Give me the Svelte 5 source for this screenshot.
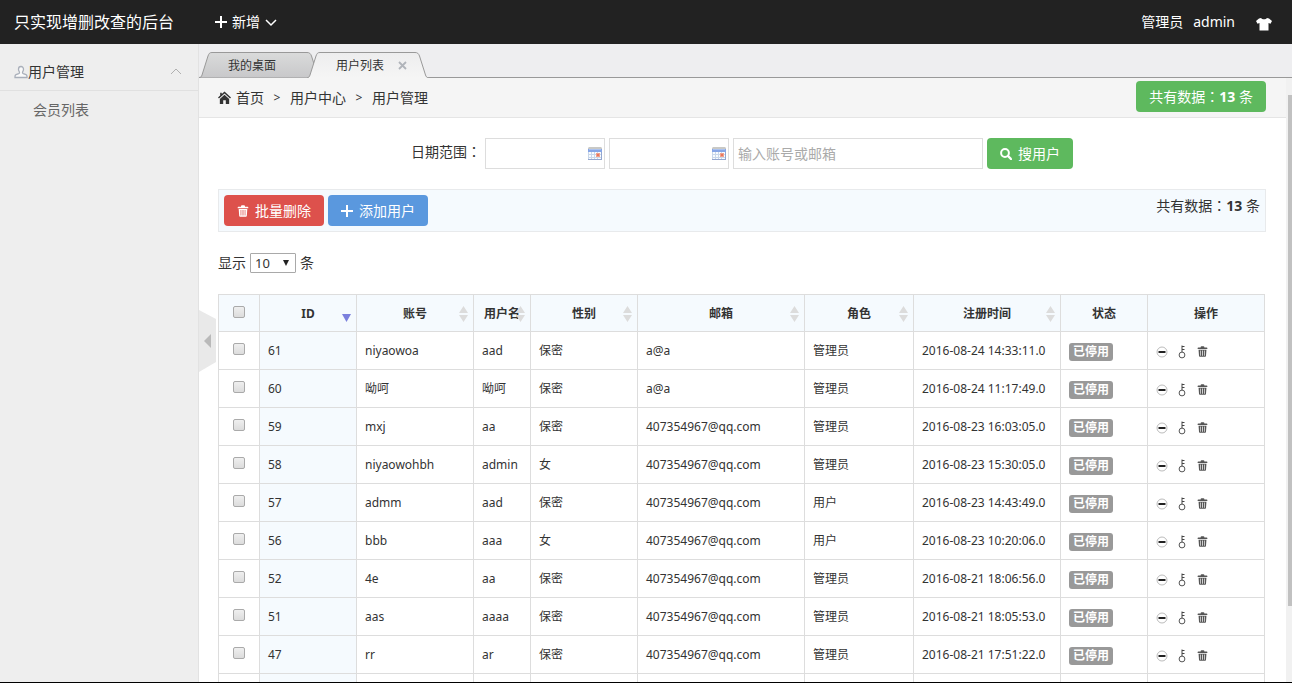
<script>
  const columns = [
    { label: 'ID', width: 97, sort: 'desc' },
    { label: '账号', width: 117, sort: 'both' },
    { label: '用户名', width: 57, sort: 'both' },
    { label: '性别', width: 107, sort: 'both' },
    { label: '邮箱', width: 167, sort: 'both' },
    { label: '角色', width: 109, sort: 'both' },
    { label: '注册时间', width: 147, sort: 'both' },
    { label: '状态', width: 87, sort: '' },
    { label: '操作', width: 117, sort: '' }
  ];

  const users = [
    [61, 'niyaowoa', 'aad', '保密', 'a@a', '管理员', '2016-08-24 14:33:11.0'],
    [60, '呦呵', '呦呵', '保密', 'a@a', '管理员', '2016-08-24 11:17:49.0'],
    [59, 'mxj', 'aa', '保密', '407354967@qq.com', '管理员', '2016-08-23 16:03:05.0'],
    [58, 'niyaowohbh', 'admin', '女', '407354967@qq.com', '管理员', '2016-08-23 15:30:05.0'],
    [57, 'admm', 'aad', '保密', '407354967@qq.com', '用户', '2016-08-23 14:43:49.0'],
    [56, 'bbb', 'aaa', '女', '407354967@qq.com', '用户', '2016-08-23 10:20:06.0'],
    [52, '4e', 'aa', '保密', '407354967@qq.com', '管理员', '2016-08-21 18:06:56.0'],
    [51, 'aas', 'aaaa', '保密', '407354967@qq.com', '管理员', '2016-08-21 18:05:53.0'],
    [47, 'rr', 'ar', '保密', '407354967@qq.com', '管理员', '2016-08-21 17:51:22.0']
  ];

  let selected = $state([]);
  let menuOpen = $state(true);
  const toggleAll = (e) => {
    selected = e.currentTarget.checked ? users.map((u) => u[0]) : [];
  };
</script>

{#snippet trash(size)}
  <svg width={size} height={size} viewBox="0 0 12 12" aria-hidden="true">
    <path fill="currentColor" fill-rule="evenodd" d="M4 1.2C4 .6 4.4.3 5 .3h2c.6 0 1 .3 1 .9v.5h2.6c.5 0 .7.3.7.7v.9H.7v-.9c0-.4.2-.7.7-.7H4zM1.7 4h8.6l-.5 7c0 .5-.4.8-.9.8H3.1c-.5 0-.9-.3-.9-.8zM3.6 5v5.6h.7V5zM5.600 5v5.600h.8V5zM7.700 5v5.600h.7V5z" />
  </svg>
{/snippet}

{#snippet calendar()}
  <svg class="cal" width="16" height="16" viewBox="0 0 16 16" aria-hidden="true">
    <path fill="#c9c9c6" d="M2 1h12l1 1v1H1V2z" />
    <path fill="#86a5e6" d="M1 3h14v3H1z" />
    <path fill="#aac2f0" d="M2 3h12v1H2z" />
    <path fill="#f8fbfe" d="M1 6h14v7H1z" />
    <path stroke="#c9d7ea" d="M1.500 6v7M4.500 6v7M7.500 6v7M10.500 6v7M1 8.500h13M1 11.500h13" fill="none" />
    <path fill="#f0a08c" d="M9 7h4v4H9z" />
    <path fill="#e8775c" d="M10 8h2v2h-2z" />
    <path fill="#93a6cf" d="M1 13h14v1H1zM14 6h1v8h-1z" />
  </svg>
{/snippet}

<div class="app">
  <header class="top">
    <a class="brand" href="#home">只实现增删改查的后台</a>
    <button class="new">
      <svg width="12" height="12" viewBox="0 0 12 12" aria-hidden="true"><path d="M6 0v12M0 6h12" stroke="#fff" stroke-width="2" /></svg>
      新增
      <svg width="12" height="12" viewBox="0 0 12 12" aria-hidden="true"><path d="M1 4l5 5 5-5" fill="none" stroke="#fff" stroke-width="1.500" /></svg>
    </button>
    <div class="account">
      <span>管理员</span>
      <a href="#admin">admin</a>
      <button class="skin" aria-label="换肤">
        <svg width="16" height="14" viewBox="0 0 16 14" aria-hidden="true"><path fill="#fff" d="M5 1c1 1.800 5 1.800 6 0l2 .5L16 4l-1.500 2.800-2-.8v7.500h-9V6l-2 .8L0 4l3-2.500z" /></svg>
      </button>
    </div>
  </header>

  <div class="body">
    <aside class="side">
      <button class="group" onclick={() => (menuOpen = !menuOpen)}>
        <svg width="14" height="14" viewBox="0 0 14 14" aria-hidden="true"><path d="M7 1.500C5.400 1.500 4.500 2.700 4.500 4.300c0 1.300.6 2 1 2.900.2.700-.2 1.100-.8 1.400L2 9.700c-.8.400-1 .8-1 1.800v1h12v-1c0-1-.2-1.400-1-1.800L9.300 8.600c-.6-.3-1-.7-.8-1.400.4-.9 1-1.600 1-2.900 0-1.600-.9-2.800-2.500-2.800z" fill="#fafafa" stroke="#a9afba" stroke-width="1.300" /></svg>
        <span>用户管理</span>
        <svg class="fold" width="12" height="12" viewBox="0 0 12 12" aria-hidden="true"><path d="M1 8l5-5 5 5" fill="none" stroke="#b0b0b0" /></svg>
      </button>
      {#if menuOpen}
        <a class="entry" href="#members">会员列表</a>
      {/if}
    </aside>

    <section class="work">
      <ul class="tabs">
        <li class="tab">
          <svg width="122" height="26" viewBox="0 0 122 26" aria-hidden="true">
            <defs><linearGradient id="tabGrey" x2="0" y2="1"><stop stop-color="#dadbdb" /><stop offset="1" stop-color="#c8c8ca" /></linearGradient></defs>
            <path d="M0 25.500C2 25.500 2.500 24.500 3 23L9 4C10 1.500 10.500.5 13 .5h95c2.500 0 3.500 1 4.500 3.500l6 19c.5 1.500 1 2.500 3.500 2.500" fill="url(#tabGrey)" stroke="#999" />
          </svg>
          <a href="#desktop">我的桌面</a>
        </li>
        <li class="tab active">
          <svg width="122" height="26" viewBox="0 0 122 26" aria-hidden="true">
            <defs><linearGradient id="tabLight" x2="0" y2="1"><stop stop-color="#ededee" /><stop offset="1" stop-color="#f5f5f5" /></linearGradient></defs>
            <path d="M0 26C2 25.500 2.500 24.500 3 23L9 4C10 1.500 10.500.5 13 .5h95c2.500 0 3.500 1 4.500 3.500l6 19c.5 1.500 1 2.500 3.500 3" fill="url(#tabLight)" stroke="#999" />
          </svg>
          <a href="#users">用户列表</a>
          <button class="close" aria-label="关闭">
            <svg width="9" height="9" viewBox="0 0 9 9" aria-hidden="true"><path d="M1 1l7 7M8 1L1 8" stroke="#b0b4ba" stroke-width="1.800" /></svg>
          </button>
        </li>
      </ul>

      <div class="frame">
        <main class="page">
          <nav class="crumbs">
            <svg width="13" height="13" viewBox="0 0 12 12" aria-hidden="true"><path fill="#333" d="M6 .5L12 6l-.9 1L6 2.400.9 7 0 6l2-1.900V1.500h1.500v1.300zM6 3.500L10.300 7.300V12H7.200V8.500H4.800V12H1.700V7.300z" /></svg>
            <a class="first" href="#home">首页</a><span class="sep">&gt;</span><a href="#center">用户中心</a><span class="sep">&gt;</span><a href="#users">用户管理</a>
            <a class="btn green total" href="#refresh">共有数据<span class="colon">：</span><b>13</b> 条</a>
          </nav>

          <div class="content">
            <form class="search" onsubmit={(e) => e.preventDefault()}>
              <label for="from">日期范围<span class="colon">：</span></label>
              <span class="date"><input id="from" type="text" />{@render calendar()}</span>
              <span class="date"><input type="text" aria-label="结束日期" />{@render calendar()}</span>
              <input class="keyword" type="text" placeholder="输入账号或邮箱" aria-label="账号或邮箱" />
              <button class="btn green">
                <svg width="12" height="12" viewBox="0 0 12 12" aria-hidden="true"><circle cx="5" cy="5" r="3.900" fill="none" stroke="#fff" stroke-width="2" /><path d="M8 8l3 3" stroke="#fff" stroke-width="2.400" stroke-linecap="round" /></svg>
                搜用户
              </button>
            </form>

            <div class="bar">
              <button class="btn red">{@render trash(12)}批量删除</button>
              <button class="btn blue">
                <svg width="12" height="12" viewBox="0 0 12 12" aria-hidden="true"><path d="M6 0v12M0 6h12" stroke="#fff" stroke-width="2" /></svg>
                添加用户
              </button>
              <span class="count">共有数据<span class="colon">：</span><b>13</b> 条</span>
            </div>

            <div class="length">
              <label for="size">显示</label>
              <span class="select">
                <select id="size"><option>10</option><option>25</option><option>50</option></select>
                <svg width="6" height="6" viewBox="0 0 6 6" aria-hidden="true"><path d="M0 0h6L3 6z" fill="#222" /></svg>
              </span>
              <span>条</span>
            </div>

            <table>
              <colgroup>
                <col style="width:{(41 / 1046) * 100}%" />
                {#each columns as c}<col style="width:{(c.width / 1046) * 100}%" />{/each}
              </colgroup>
              <thead>
                <tr>
                  <th class="check"><input type="checkbox" aria-label="全选" onchange={toggleAll} /></th>
                  {#each columns as c}
                    <th>
                      {c.label}
                      {#if c.sort}
                        <svg class="sort" width="9" height="16" viewBox="0 0 9 16" aria-hidden="true">
                          {#if c.sort === 'desc'}
                            <path d="M0 8h9l-4.500 8z" fill="#7b80dd" />
                          {:else}
                            <path d="M0 7h9L4.500 0zM0 9h9l-4.500 7z" fill="#dcdcdc" />
                          {/if}
                        </svg>
                      {/if}
                    </th>
                  {/each}
                </tr>
              </thead>
              <tbody>
                {#each users as user}
                  <tr>
                    <td class="check"><input type="checkbox" value={user[0]} bind:group={selected} aria-label="选择 {user[0]}" /></td>
                    {#each user as value, i}<td class:sorted={i === 0}>{value}</td>{/each}
                    <td><span class="badge">已停用</span></td>
                    <td>
                      <div class="ops">
                        <button aria-label="停用">
                          <svg width="12" height="12" viewBox="0 0 12 12" aria-hidden="true"><circle cx="6" cy="6" r="5" fill="none" stroke="#aaa" stroke-width=".8" /><path d="M2.500 6h7" stroke="#222" stroke-width="2" /></svg>
                        </button>
                        <button aria-label="修改密码">
                          <svg width="12" height="14" viewBox="0 0 12 14" aria-hidden="true"><circle cx="6" cy="10" r="2.900" fill="none" stroke="#555" /><path d="M6 7V.5M6 1.500h2.500M6 4.500h2.500" fill="none" stroke="#444" /></svg>
                        </button>
                        <button aria-label="删除">{@render trash(11)}</button>
                      </div>
                    </td>
                  </tr>
                {/each}
                <tr><td></td><td class="sorted"></td>{#each columns.slice(1) as _}<td></td>{/each}</tr>
              </tbody>
            </table>
          </div>
        </main>
        <div class="track"><div class="thumb"></div></div>
      </div>
    </section>
  </div>

  <button class="handle" aria-label="收起侧栏">
    <svg width="18" height="62" viewBox="0 0 18 62" aria-hidden="true"><path d="M0 0l17 9v43L0 62z" fill="#e9e9e9" /><path d="M12 24v14l-7-7z" fill="#b9b9b9" /></svg>
  </button>
</div>

<style>
  :global(body) { margin: 0; }
  .app, .app * { box-sizing: border-box; }
  .app {
    position: relative;
    display: flex;
    flex-direction: column;
    height: 100vh;
    overflow: hidden;
    border-bottom: 1px solid #000;
    background: #fff;
    color: #333;
    font: 14px/22px "Noto Sans", "Noto Sans CJK SC", sans-serif;
  }
  a { color: inherit; text-decoration: none; }
  button, input, select { font: inherit; color: inherit; margin: 0; }
  button { border: 0; padding: 0; background: none; cursor: pointer; }
  svg { display: block; flex: none; }
  .colon { font-family: "Noto Sans CJK TC", sans-serif; line-height: 1; }

  .top {
    display: flex;
    align-items: center;
    flex: none;
    height: 44px;
    padding: 0 20px 0 14px;
    background: #222;
    color: #fff;
  }
  .brand { font-size: 16px; }
  .new { display: flex; align-items: center; gap: 5px; margin-left: 41px; }
  .account { display: flex; align-items: center; gap: 10px; margin-left: auto; }
  .skin { margin: 4px 0 0 11px; }

  .body { display: flex; flex: 1; min-height: 0; }
  .side {
    flex: none;
    width: 199px;
    border-right: 1px solid #e2e2e2;
    background: #eee;
  }
  .group {
    display: flex;
    align-items: center;
    width: 100%;
    height: 47px;
    padding: 9px 16px 0 14px;
    border-bottom: 1px solid #e0e0e0;
  }
  .fold { margin-left: auto; }
  .entry { display: block; padding: 8px 33px; color: #666; }

  .work { display: flex; flex-direction: column; flex: 1; min-width: 0; }
  .tabs {
    display: flex;
    flex: none;
    height: 34px;
    margin: 0;
    padding: 8px 0 0;
    list-style: none;
    background: #eeeef0;
    box-shadow: inset 0 -1px #999;
    font-size: 12px;
  }
  .tab { position: relative; width: 122px; height: 26px; padding: 3px 29px; line-height: 22px; }
  .tab + .tab { margin-left: -14px; }
  .tab > svg { position: absolute; left: 0; top: 0; }
  .tab a { position: relative; }
  .close { position: absolute; right: 22px; top: 9px; }

  .frame { display: flex; flex: 1; min-height: 0; }
  .page { flex: 1; min-width: 0; overflow: hidden; }
  .track { flex: none; width: 6px; padding: 17px 0 0 2px; background: #f1f1f1; }
  .thumb { height: 87%; background: #c1c1c1; }

  .crumbs {
    display: flex;
    align-items: center;
    height: 40px;
    padding: 0 20px 0 19px;
    border-bottom: 1px solid #e5e5e5;
    background: #f5f5f5;
  }
  .first { margin-left: 5px; }
  .sep { width: 26px; text-align: center; font-size: 12px; }
  .total { align-self: flex-start; margin: 3px 0 0 auto; }

  .btn {
    display: flex;
    align-items: center;
    gap: 6px;
    height: 31px;
    padding: 0 13px;
    border-radius: 4px;
    color: #fff;
    white-space: nowrap;
  }
  .total { display: block; line-height: 31px; }
  .green { background: #5eb95e; }
  .red { background: #dd514c; }
  .blue { background: #5a98de; }

  .content { padding: 20px 20px 0 19px; }
  .search { display: flex; justify-content: center; gap: 4px; }
  .search label { line-height: 28px; }
  .search input {
    height: 31px;
    padding: 4px;
    border: 1px solid #ddd;
    border-radius: 0;
    background: #fff;
    outline: 0;
  }
  .date { position: relative; width: 120px; }
  .date input { width: 100%; }
  .cal { position: absolute; right: 2px; top: 8px; }
  .search .keyword { width: 250px; }
  .keyword::placeholder { color: #aaa; opacity: 1; }

  .bar {
    display: flex;
    gap: 4px;
    margin: 20px 0;
    padding: 5px;
    border: 1px solid #e8eaec;
    background: #f5fafe;
  }
  .count { margin-left: auto; }

  .length { display: flex; align-items: center; gap: 4px; margin-bottom: 20px; }
  .select { position: relative; width: 46px; height: 20px; }
  .select select {
    display: block;
    width: 100%;
    height: 20px;
    padding: 0 4px;
    border: 1px solid #a9a9a9;
    border-radius: 1px;
    background: #fff;
    font-size: 13px;
    line-height: 18px;
    appearance: none;
  }
  .select svg { position: absolute; right: 7px; top: 7px; pointer-events: none; }

  table {
    width: calc(100% - 1px);
    border-collapse: collapse;
    table-layout: fixed;
    font-size: 12px;
    line-height: 20px;
  }
  th, td { border: 1px solid #ddd; white-space: nowrap; }
  th { position: relative; height: 37px; padding: 2px 0 0; background: #f5fafe; font-weight: 700; }
  td { height: 38px; padding: 0 8px; }
  .sorted { background: #f5fafe; }
  .sort { position: absolute; right: 5px; top: 11px; }
  .check { padding: 0; text-align: center; }
  .check input {
    display: block;
    width: 12px;
    height: 12px;
    margin: 0 auto 2px;
    border: 1px solid #aaa;
    border-radius: 2px;
    background: linear-gradient(#efefef, #dcdcdc);
    appearance: none;
  }
  td.check input { margin-bottom: 4px; }
  .check input:checked { background: #5a98de; }
  .badge {
    display: block;
    width: max-content;
    margin-top: 2px;
    padding: 0 4px;
    border-radius: 3px;
    background: #999;
    color: #fff;
    font-weight: 700;
    line-height: 18px;
  }
  .ops { display: flex; align-items: center; gap: 8px; margin-top: 2px; }
  .ops button { display: flex; justify-content: center; width: 12px; color: #555; }

  .handle { position: absolute; left: 199px; top: 50%; transform: translateY(-50%); }
</style>
